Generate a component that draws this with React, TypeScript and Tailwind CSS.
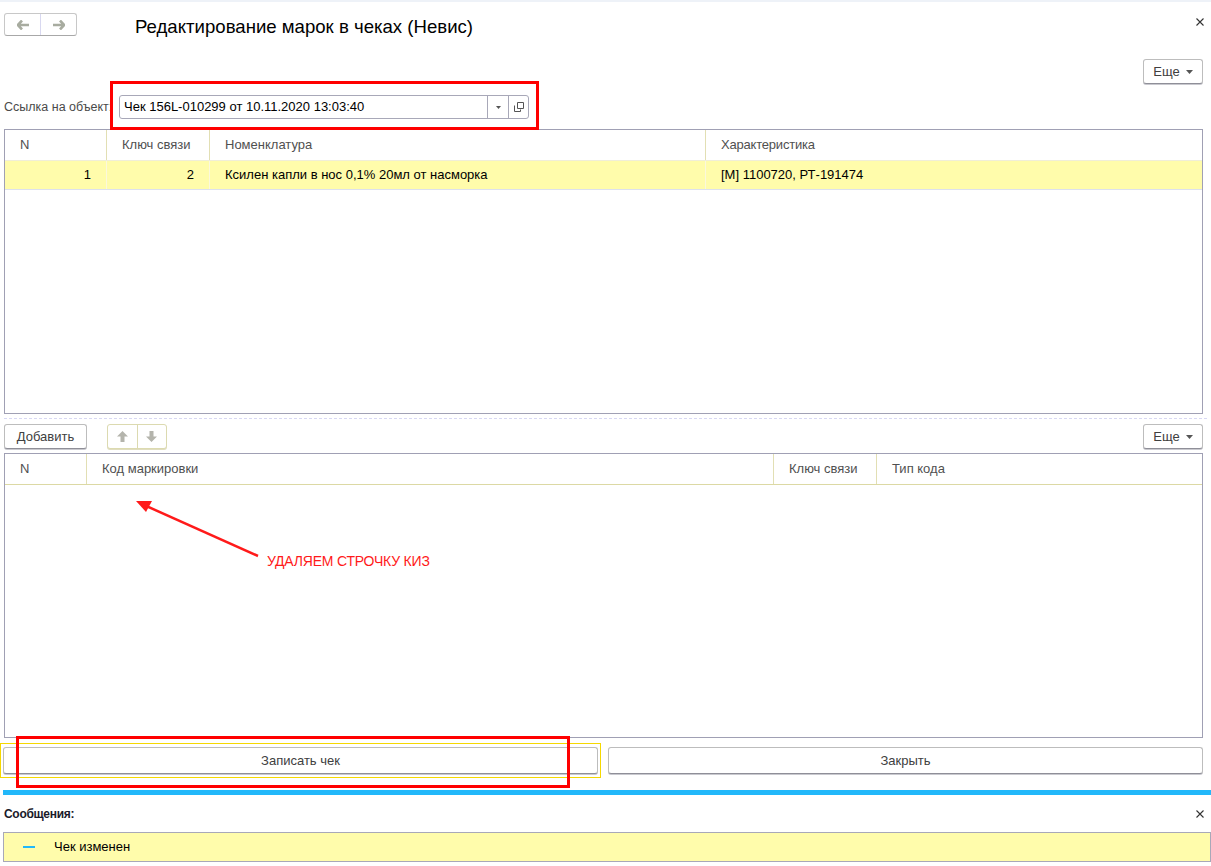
import React from "react";

const Btn = ({ children, className = "" }: { children: React.ReactNode; className?: string }) => (
  <div
    className={
      "flex items-center justify-center bg-white border border-[#bdbdbd] border-b-[#8f8f98] rounded-[3px] shadow-[0_1px_0_#c9c9cf] text-[#404040] " +
      className
    }
  >
    {children}
  </div>
);

const Caret = () => (
  <svg width="7" height="4" viewBox="0 0 7 4" className="ml-[6px]">
    <path d="M0 0h7L3.5 4z" fill="#555" />
  </svg>
);

export default function App() {
  return (
    <div
      className="relative w-[1211px] h-[866px] bg-white overflow-hidden text-[13px] text-[#1a1a1a]"
      style={{ fontFamily: "'Liberation Sans', Arial, sans-serif" }}
    >
      <div className="h-[2px] bg-[#eef2f8]" />
      {/* header */}
      <div className="flex items-center h-[23px] mt-[11px] pl-[4px] pr-[7px]">
        <div className="flex h-[23px] w-[73px] border border-[#c8c8c8] border-b-[#a8a8a8] rounded-[3px] bg-white">
          <div className="flex-1 flex items-center justify-center border-r border-[#d8d8f0]">
            <svg width="12" height="10" viewBox="0 0 12 10">
              <path d="M5 0.5L0.8 5 5 9.5M1 5h11" stroke="#a8aca0" strokeWidth="2.6" fill="none" />
            </svg>
          </div>
          <div className="flex-1 flex items-center justify-center">
            <svg width="12" height="10" viewBox="0 0 12 10">
              <path d="M7 0.5L11.2 5 7 9.5M11 5H0" stroke="#a8aca0" strokeWidth="2.6" fill="none" />
            </svg>
          </div>
        </div>
        <div className="ml-[58px] text-[18.6px] text-black leading-none mt-[5px]">Редактирование марок в чеках (Невис)</div>
        <div className="ml-auto -mt-[6px]">
          <svg width="8" height="8" viewBox="0 0 8 8">
            <path d="M0.5 0.5l7 7M7.5 0.5l-7 7" stroke="#333" strokeWidth="1.1" />
          </svg>
        </div>
      </div>
      {/* Еще row */}
      <div className="flex justify-end mt-[23px] pr-[8px]">
        <Btn className="w-[60px] h-[25px]">
          <span>Еще</span>
          <Caret />
        </Btn>
      </div>
      {/* Ссылка */}
      <div className="flex items-center mt-[11px] pl-[4px] h-[24px]">
        <span className="text-[12.5px] text-[#4a4a4a] w-[115px] whitespace-nowrap overflow-hidden">Ссылка на объект:</span>
        <div className="flex h-[24px] w-[410px] border border-[#a8a8b8] rounded-[3px] bg-white">
          <div className="flex-1 flex items-center pl-[4px] text-black">Чек 156L-010299 от 10.11.2020 13:03:40</div>
          <div className="w-[21px] flex items-center justify-center border-l border-[#a8a8b8]">
            <svg width="5" height="3" viewBox="0 0 5 3">
              <path d="M0 0h5L2.5 3z" fill="#555" />
            </svg>
          </div>
          <div className="w-[20px] flex items-center justify-center border-l border-[#a8a8b8]">
            <svg width="10" height="10" viewBox="0 0 10 10">
              <path d="M0.5 3.5v6h6v-2M3.5 0.5h6v6h-6z" stroke="#555" strokeWidth="1" fill="none" />
            </svg>
          </div>
        </div>
      </div>
      {/* Table 1 */}
      <div className="mt-[10px] ml-[4px] w-[1199px] h-[285px] border border-[#a0a0b4] bg-white">
        <div className="flex h-[31px] text-[#505050] border-b border-[#f0eed8]">
          <div className="w-[102px] border-r border-[#e2dfb4] flex items-center pl-[15px]">N</div>
          <div className="w-[103px] border-r border-[#e2dfb4] flex items-center pl-[15px]">Ключ связи</div>
          <div className="w-[496px] border-r border-[#e2dfb4] flex items-center pl-[15px]">Номенклатура</div>
          <div className="flex-1 flex items-center pl-[15px] tracking-[-0.2px]">Характеристика</div>
        </div>
        <div className="flex h-[29px] bg-[#fffcab] border-b border-[#dde1ee] text-black">
          <div className="w-[102px] border-r border-[#fbf8dc] flex items-center justify-end pr-[15px]">1</div>
          <div className="w-[103px] border-r border-[#fbf8dc] flex items-center justify-end pr-[15px]">2</div>
          <div className="w-[496px] border-r border-[#fbf8dc] flex items-center pl-[15px]">Ксилен капли в нос 0,1% 20мл от насморка</div>
          <div className="flex-1 flex items-center pl-[15px]">[М] 1100720, РТ-191474</div>
        </div>
      </div>
      {/* dashed */}
      <div className="mt-[4px] mx-[4px] border-t border-dashed border-[#d8d8f4]" />
      {/* toolbar */}
      <div className="flex items-center mt-[5px] px-[4px] pr-[8px] h-[25px]">
        <Btn className="w-[83px] h-[25px]">Добавить</Btn>
        <div className="ml-[20px] flex h-[25px] w-[60px] border border-[#dcdab0] rounded-[3px] bg-white shadow-[0_1px_0_#e0ddc0]">
          <div className="flex-1 flex items-center justify-center border-r border-[#dcdab0]">
            <svg width="11" height="11" viewBox="0 0 11 11">
              <path d="M5.5 0L11 5.5H7.5V11h-4V5.5H0z" fill="#b4b4ac" />
            </svg>
          </div>
          <div className="flex-1 flex items-center justify-center">
            <svg width="11" height="11" viewBox="0 0 11 11">
              <path d="M5.5 11L11 5.5H7.5V0h-4v5.5H0z" fill="#b4b4ac" />
            </svg>
          </div>
        </div>
        <Btn className="ml-auto w-[60px] h-[25px]">
          <span>Еще</span>
          <Caret />
        </Btn>
      </div>
      {/* Table 2 */}
      <div className="mt-[4px] ml-[4px] w-[1199px] h-[285px] border border-[#a0a0b4] bg-white">
        <div className="flex h-[31px] text-[#505050] border-b border-[#dcd9a4]">
          <div className="w-[82px] border-r border-[#e2dfb4] flex items-center pl-[15px]">N</div>
          <div className="w-[687px] border-r border-[#e2dfb4] flex items-center pl-[15px]">Код маркировки</div>
          <div className="w-[103px] border-r border-[#e2dfb4] flex items-center pl-[15px]">Ключ связи</div>
          <div className="flex-1 flex items-center pl-[15px]">Тип кода</div>
        </div>
      </div>
      {/* bottom buttons */}
      <div className="flex mt-[5px] px-[0px] pr-[8px] h-[35px] items-center">
        <div className="w-[601px] h-[35px] border border-[#f5d800] flex items-center px-[2px]">
          <Btn className="w-full h-[27px]">Записать чек</Btn>
        </div>
        <Btn className="ml-[7px] flex-1 h-[27px]">Закрыть</Btn>
      </div>
      {/* blue bar */}
      <div className="mt-[12px] ml-[3px] h-[5px] bg-[#22b8fa]" />
      {/* messages */}
      <div className="flex items-center mt-[10px] pl-[4px] pr-[7px] h-[17px]">
        <span className="font-bold text-[12px] tracking-[-0.3px] text-[#1a1a2a]">Сообщения:</span>
        <svg width="8" height="8" viewBox="0 0 8 8" className="ml-auto">
          <path d="M0.5 0.5l7 7M7.5 0.5l-7 7" stroke="#333" strokeWidth="1.1" />
        </svg>
      </div>
      <div className="mt-[10px] ml-[3px] h-[30px] border border-[#a8a8b8] bg-[#fffcab] flex items-center">
        <div className="ml-[19px] w-[12px] h-[2px] bg-[#22b8fa]" />
        <span className="ml-[19px] text-black">Чек изменен</span>
      </div>

      {/* annotations */}
      <div className="absolute left-[110px] top-[81px] w-[429px] h-[49px] border-[3px] border-[#ff0000]" />
      <div className="absolute left-[16px] top-[736px] w-[554px] h-[52px] border-[3px] border-[#ff0000]" />
      <svg className="absolute left-[130px] top-[495px]" width="140" height="70" viewBox="0 0 140 70">
        <path d="M128 61L14 10" stroke="#ff1a1a" strokeWidth="2.5" />
        <path d="M6 6L22 6L16 17z" fill="#ff1a1a" />
      </svg>
      <div className="absolute left-[267px] top-[551px] text-[14px] text-[#ff1a1a] tracking-[-0.2px]">УДАЛЯЕМ СТРОЧКУ КИЗ</div>
    </div>
  );
}
